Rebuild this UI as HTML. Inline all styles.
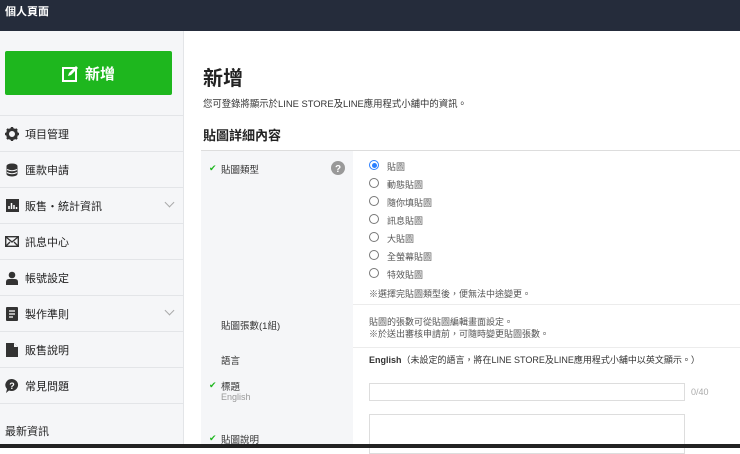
<!DOCTYPE html>
<html><head><meta charset="utf-8"><style>
*{margin:0;padding:0;box-sizing:border-box}
body{width:740px;height:448px;overflow:hidden;position:relative;background:#fff;font-family:"Liberation Sans","Noto Sans CJK TC",sans-serif;color:#222}
.top{position:absolute;left:0;top:0;width:740px;height:31px;background:#252c3b;color:#fff;font-size:11px;font-weight:bold;padding:3px 5px}
.side{position:absolute;left:0;top:31px;width:184px;height:417px;background:#f5f6f8;border-right:1px solid #e3e5e8}
.btn{position:absolute;left:5px;top:20px;width:167px;height:44px;background:#1eb71e;border-radius:2px;color:#fff;font-weight:bold;font-size:15px;display:flex;align-items:center;justify-content:center;gap:6px}
.menu{position:absolute;left:0;top:84px;width:183px}
.item{height:36px;border-top:1px solid #e3e5e8;display:flex;align-items:center;padding-left:5px;font-size:11px;position:relative}
.item .ic{width:14px;height:14px;margin-right:6px;display:flex;align-items:center;justify-content:center}
.chev{position:absolute;right:10px;top:11px;width:7px;height:7px;border-right:1px solid #aaa;border-bottom:1px solid #aaa;transform:rotate(45deg)}
.news{position:absolute;left:5px;top:392px;font-size:11px}
.bottom{position:absolute;left:0;top:444px;width:740px;height:4px;background:#222}
h1{position:absolute;left:203px;top:62px;font-size:20px;font-weight:bold}
.sub{position:absolute;left:203px;top:96px;font-size:9.4px;color:#333}
h2{position:absolute;left:203px;top:125px;font-size:13px;font-weight:bold}
.tbl{position:absolute;left:201px;top:150px;width:539px;height:294px;border-top:1px solid #ddd}
.lc{position:absolute;left:0;top:0;width:152px;height:294px;background:#f5f6f8}
.lab{position:absolute;font-size:9.5px;color:#333}
.ck{color:#1eb71e;font-size:9px;position:absolute;left:8px}
.rl{position:absolute;left:152px;width:387px;border-top:1px solid #ececec}
.r{position:absolute;font-size:9px;color:#555}
.rad{position:absolute;left:168px;width:10px;height:10px;border:1px solid #777;border-radius:50%;background:#fff}
.inp{position:absolute;border:1px solid #ddd;background:#fff}
</style></head><body>
<div class="top">個人頁面</div>
<div class="side">
<div class="btn"><svg width="17" height="17" viewBox="0 0 17 17"><rect x="1" y="3" width="13" height="13" fill="none" stroke="#fff" stroke-width="2"/><path d="M6 11l1-3 7-7 2 2-7 7z" fill="#fff"/></svg>新增</div>
<div class="menu">
<div class="item"><span class="ic"><svg width="14" height="14" viewBox="0 0 14 14"><circle cx="7" cy="7" r="4.5" fill="none" stroke="#333" stroke-width="3"/><path d="M7 0v3M7 11v3M0 7h3M11 7h3M2 2l2 2M10 10l2 2M12 2l-2 2M2 12l2-2" stroke="#333" stroke-width="2.4"/></svg></span>項目管理</div>
<div class="item"><span class="ic"><svg width="12" height="14" viewBox="0 0 12 14"><ellipse cx="6" cy="3" rx="5.5" ry="2.5" fill="#333"/><rect x=".5" y="3" width="11" height="8" fill="#333"/><ellipse cx="6" cy="11" rx="5.5" ry="2.5" fill="#333"/><path d="M1 6.5q5 2.5 10 0M1 9.5q5 2.5 10 0" stroke="#f5f6f8" fill="none"/></svg></span>匯款申請</div>
<div class="item"><span class="ic"><svg width="13" height="13" viewBox="0 0 13 13"><rect width="13" height="13" fill="#333"/><path d="M3 10V7M5.5 10V4M8 10V6M10.5 10V8" stroke="#fff" stroke-width="1.5"/></svg></span>販售‧統計資訊<i class="chev"></i></div>
<div class="item"><span class="ic"><svg width="14" height="11" viewBox="0 0 14 11"><rect x=".7" y=".7" width="12.6" height="9.6" fill="none" stroke="#333" stroke-width="1.4"/><path d="M1 1l6 5 6-5M1 10l4-4M13 10l-4-4" stroke="#333" fill="none" stroke-width="1.3"/></svg></span>訊息中心</div>
<div class="item"><span class="ic"><svg width="12" height="14" viewBox="0 0 12 14"><circle cx="6" cy="4" r="3.3" fill="#333"/><path d="M0 14v-3q0-3 3-3h6q3 0 3 3v3z" fill="#333"/></svg></span>帳號設定</div>
<div class="item"><span class="ic"><svg width="12" height="14" viewBox="0 0 12 14"><rect width="12" height="14" rx="1" fill="#333"/><path d="M3 4h6M3 7h6M3 10h4" stroke="#fff" stroke-width="1.3"/></svg></span>製作準則<i class="chev"></i></div>
<div class="item"><span class="ic"><svg width="12" height="14" viewBox="0 0 12 14"><path d="M0 0h8l4 4v10H0z" fill="#333"/><path d="M8 0v4h4" fill="#f5f6f8"/></svg></span>販售說明</div>
<div class="item"><span class="ic"><svg width="14" height="14" viewBox="0 0 14 14"><path d="M7 0a6.5 6 0 1 1-3 11.5L1 14l1-4A6.5 6 0 0 1 7 0z" fill="#333"/><text x="7" y="10" font-size="9" fill="#fff" text-anchor="middle" font-weight="bold" font-family="Liberation Sans">?</text></svg></span>常見問題</div>
<div class="item" style="height:50px"></div>
</div>
<div class="news">最新資訊</div>
</div>
<h1>新增</h1>
<div class="sub">您可登錄將顯示於LINE STORE及LINE應用程式小舖中的資訊。</div>
<h2>貼圖詳細內容</h2>
<div class="tbl">
<div class="lc"></div>
<span class="ck" style="top:12px">✔</span><span class="lab" style="left:20px;top:11px">貼圖類型</span>
<svg style="position:absolute;left:130px;top:10px" width="14" height="14"><circle cx="7" cy="7" r="7" fill="#999"/><text x="7" y="11" font-size="10" fill="#fff" text-anchor="middle" font-weight="bold" font-family="Liberation Sans">?</text></svg>
<div class="rad" style="top:9px;border-color:#2a7fff"><div style="position:absolute;left:1.5px;top:1.5px;width:5px;height:5px;border-radius:50%;background:#2a7fff"></div></div><span class="r" style="left:186px;top:9px">貼圖</span>
<div class="rad" style="top:27px"></div><span class="r" style="left:186px;top:27px">動態貼圖</span>
<div class="rad" style="top:45px"></div><span class="r" style="left:186px;top:45px">隨你填貼圖</span>
<div class="rad" style="top:63px"></div><span class="r" style="left:186px;top:63px">訊息貼圖</span>
<div class="rad" style="top:81px"></div><span class="r" style="left:186px;top:81px">大貼圖</span>
<div class="rad" style="top:99px"></div><span class="r" style="left:186px;top:99px">全螢幕貼圖</span>
<div class="rad" style="top:117px"></div><span class="r" style="left:186px;top:117px">特效貼圖</span>
<span class="r" style="left:168px;top:136px">※選擇完貼圖類型後，便無法中途變更。</span>
<div class="rl" style="top:153px"></div>
<span class="lab" style="left:20px;top:167px">貼圖張數(1組)</span>
<span class="r" style="left:168px;top:165px;line-height:12px">貼圖的張數可從貼圖編輯畫面設定。<br>※於送出審核申請前，可隨時變更貼圖張數。</span>
<div class="rl" style="top:196px"></div>
<span class="lab" style="left:20px;top:202px">語言</span>
<span class="r" style="left:168px;top:202px;color:#333"><b>English</b>（未設定的語言，將在LINE STORE及LINE應用程式小舖中以英文顯示。）</span>
<span class="ck" style="top:229px">✔</span><span class="lab" style="left:20px;top:228px">標題</span><span class="lab" style="left:20px;top:241px;color:#999;font-size:9px">English</span>
<div class="inp" style="left:168px;top:232px;width:316px;height:18px"></div><span class="r" style="left:490px;top:236px;color:#aaa">0/40</span>
<div class="inp" style="left:168px;top:263px;width:316px;height:40px"></div>
<span class="ck" style="top:282px">✔</span><span class="lab" style="left:20px;top:281px">貼圖說明</span>
</div>
<div class="bottom"></div>
</body></html>
